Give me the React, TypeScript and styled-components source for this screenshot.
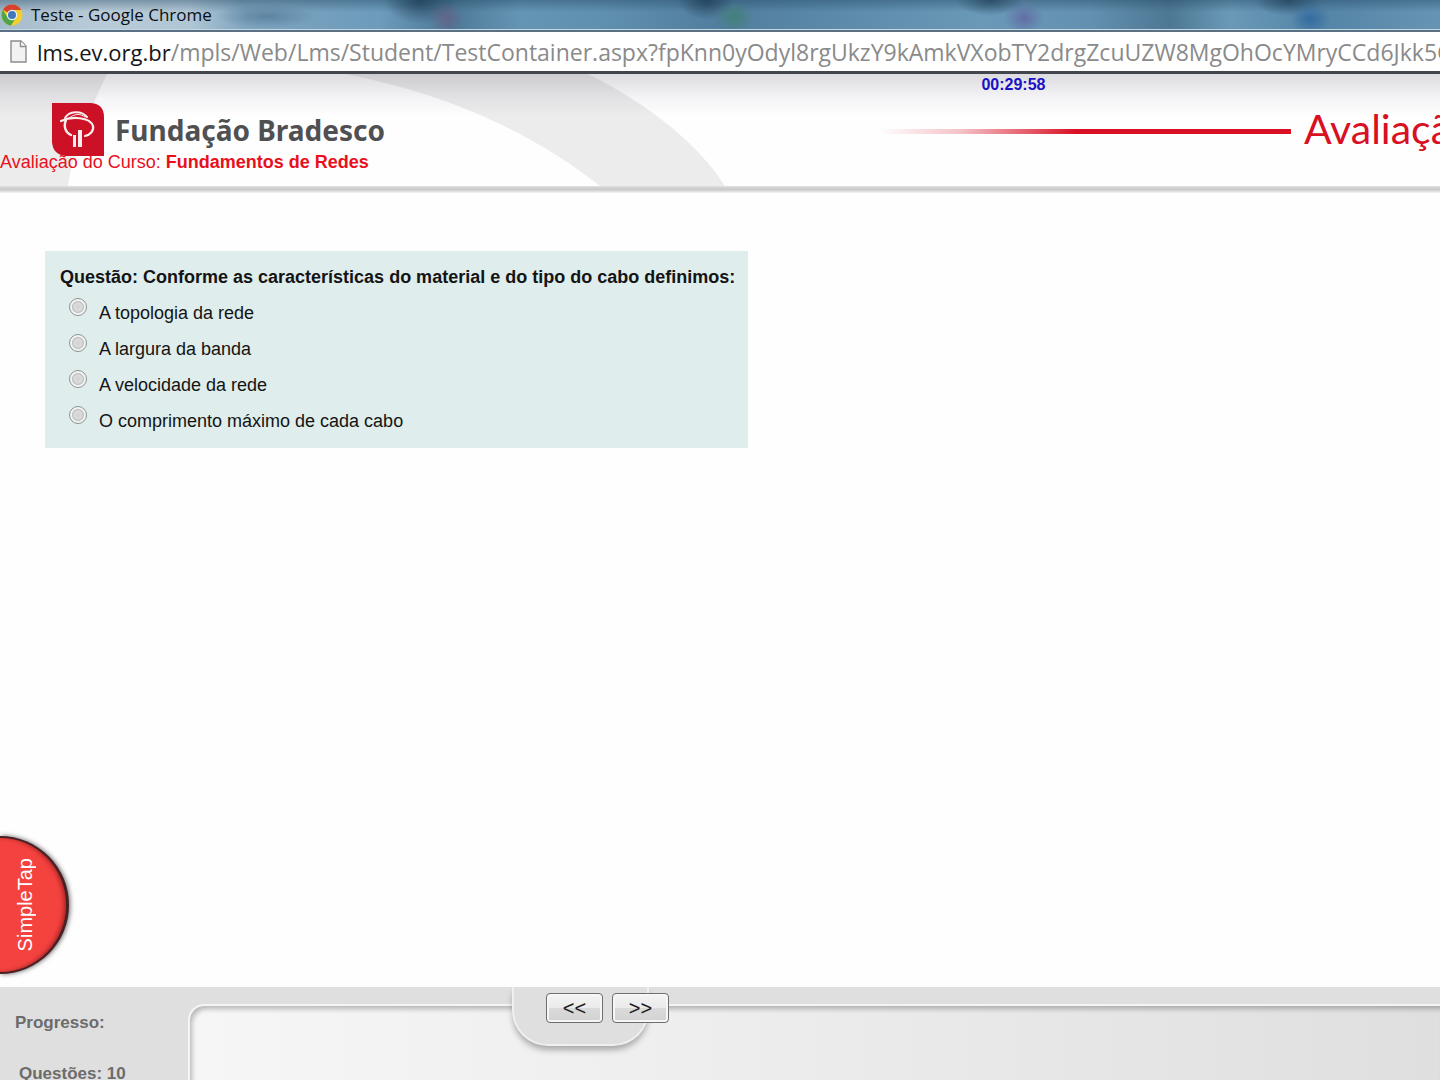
import React, { useState } from "react";
import styled, { createGlobalStyle } from "styled-components";

const sans = `"Liberation Sans", Arial, Helvetica, sans-serif`;
const humanist = `"Open Sans", "Noto Sans", sans-serif`;

const GlobalStyle = createGlobalStyle`
  * { box-sizing: border-box; }
  body { margin: 0; background: #fefefe; font-family: ${sans}; }
`;

const Page = styled.div`
  position: relative;
  display: flex;
  flex-direction: column;
  height: 100vh;
  overflow: hidden;
`;

const TitleBar = styled.div`
  display: flex;
  flex: none;
  align-items: center;
  gap: 8px;
  height: 32px;
  border-bottom: 2px solid #5a7084;
  box-shadow: inset 0 -1px 0 #c3d6e2;
  font: 17px/30px ${humanist};
  color: #0a0f14;
  white-space: nowrap;
  overflow: hidden;
  background:
    radial-gradient(ellipse 18px 16px at 446px 18px, rgba(112, 88, 128, 0.6), transparent),
    radial-gradient(ellipse 20px 16px at 734px 17px, rgba(62, 128, 112, 0.8), transparent),
    radial-gradient(ellipse 20px 16px at 1024px 18px, rgba(96, 96, 160, 0.75), transparent),
    radial-gradient(ellipse 20px 16px at 1310px 19px, rgba(48, 104, 160, 0.9), transparent),
    radial-gradient(ellipse 36px 24px at 420px 0, rgba(30, 62, 86, 0.8), transparent),
    radial-gradient(ellipse 28px 20px at 706px 0, rgba(30, 62, 86, 0.8), transparent),
    radial-gradient(ellipse 34px 16px at 990px 0, rgba(30, 62, 86, 0.7), transparent),
    radial-gradient(ellipse 34px 16px at 1288px 0, rgba(30, 62, 86, 0.7), transparent),
    radial-gradient(ellipse 50px 12px at 266px 16px, rgba(66, 106, 136, 0.55), transparent),
    linear-gradient(rgba(30, 66, 92, 0.4), transparent 40%),
    linear-gradient(90deg, #a5bccb 0, #b9cbd8 100px, #b0c6d5 190px, #7fa5bf 245px, #6c9bbb 380px, #4c7896 450px, #6595b4 520px, #6090b0 600px, #517d9e 720px, #5c8bac 850px, #6a99b7 980px, #6390b0 1090px, #4d7894 1170px, #6a99b7 1230px, #5484a6 1320px, #6694b4 100%);
`;

const AddressBar = styled.div`
  display: flex;
  flex: none;
  align-items: center;
  gap: 10px;
  height: 42px;
  padding-left: 10px;
  border-bottom: 3px solid #42464c;
  background: #fff;
  overflow: hidden;
  white-space: nowrap;
  font: 23px/38px ${humanist};
  color: #8a8a8a;
  svg { flex: none; }
`;

const Host = styled.span`
  font-size: 22px;
  color: #161616;
`;

const Header = styled.header`
  position: relative;
  display: flex;
  flex: none;
  height: 112px;
  overflow: hidden;
  background: linear-gradient(#dcdce0, #f4f4f6 24px, #fefefe 42px);
`;

const HeaderRule = styled.div`
  flex: none;
  height: 7px;
  background: linear-gradient(#e2e2e2, #cacaca 40%, #cfcfcf 60%, #f6f6f6);
`;

const Backdrop = styled.svg`
  position: absolute;
  left: 0;
  top: 0;
`;

const BrandColumn = styled.div`
  position: relative;
  flex: 0 0 61%;
  padding-top: 29px;
`;

const Brand = styled.div`
  display: flex;
  align-items: center;
  gap: 11px;
  height: 53px;
  padding-left: 52px;
  font: bold 28px/48px "Noto Sans", sans-serif;
  color: #505052;
`;

const Course = styled.div`
  margin-top: -4px;
  font-size: 18px;
  line-height: 20px;
  color: #e8101c;
  white-space: nowrap;
`;

const BannerColumn = styled.div`
  flex: 1;
  min-width: 0;
`;

const Timer = styled.div`
  padding-left: 103px;
  font-weight: bold;
  font-size: 16px;
  line-height: 22px;
  color: #1a12c4;
`;

const Banner = styled.div`
  display: flex;
  align-items: center;
  gap: 13px;
  margin-top: 9px;
`;

const BannerLine = styled.div`
  flex: 1;
  height: 5px;
  background: linear-gradient(90deg, transparent, rgba(217, 16, 36, 0.25) 20%, #d91024 48%);
`;

const BannerTitle = styled.h1`
  flex: 0 0 136px;
  margin: 0;
  padding-bottom: 4px;
  overflow: hidden;
  font: normal 41px/48px Lato, sans-serif;
  color: #d91024;
`;

const Main = styled.main`
  flex: 1;
  min-height: 0;
  padding: 58px 45px;
`;

const Question = styled.fieldset`
  width: fit-content;
  margin: 0;
  padding: 15px 13px 15px 15px;
  border: 0;
  background: #dfedec;
  color: #141414;
  font-size: 18px;
`;

const QuestionText = styled.legend`
  float: left;
  padding: 0;
  font-weight: bold;
  line-height: 23px;
`;

const Options = styled.div`
  clear: both;
`;

const Option = styled.label`
  display: flex;
  align-items: flex-start;
  gap: 12px;
  height: 36px;
  padding: 9px 0 0 9px;
  span { line-height: 31px; }
`;

const Radio = styled.input`
  appearance: none;
  width: 18px;
  height: 18px;
  margin: 0;
  border: 1px solid #8d9393;
  border-radius: 50%;
  background: radial-gradient(circle 8px, #d2d2d2 0, #dcdcdc 50%, #bcbfbf 68%, #f4f4f4 82%);
  &:checked {
    background: radial-gradient(circle 8px, #2c4c62 50%, #f2f2f2 64%);
  }
`;

const SimpleTap = styled.button`
  position: absolute;
  left: 0;
  bottom: 106px;
  display: flex;
  align-items: center;
  width: 69px;
  height: 138px;
  padding: 0 0 0 13px;
  border: solid #4a2024;
  border-width: 2px 3px 2px 0;
  border-radius: 0 69px 69px 0;
  background: #f4423f;
  box-shadow: 1px 0 5px rgba(0, 0, 0, 0.6), inset -3px 0 4px -1px rgba(90, 10, 10, 0.5);
  color: #fff;
  font: 20px/24px ${sans};
  span {
    writing-mode: vertical-rl;
    transform: rotate(180deg);
  }
`;

const Footer = styled.footer`
  position: relative;
  display: flex;
  flex: none;
  height: 93px;
  background: #dfdfdf;
`;

const Status = styled.div`
  display: flex;
  flex: 0 0 188px;
  flex-direction: column;
  gap: 31px;
  padding: 26px 0 0 15px;
  font-weight: bold;
  font-size: 17px;
  line-height: 20px;
  color: #6c6c6c;
  white-space: nowrap;
`;

const Indented = styled.div`
  padding-left: 4px;
`;

const Panel = styled.div`
  flex: 1;
  margin-top: 17px;
  border: solid #f4f4f4;
  border-width: 2px 0 0 2px;
  border-top-left-radius: 16px;
  background: linear-gradient(90deg, #f6f6f6, #eeeeee 40%, #dfdfdf);
  box-shadow: inset 3px 4px 5px -1px rgba(0, 0, 0, 0.25);
`;

const NavTab = styled.nav`
  position: absolute;
  left: 512px;
  top: 0;
  display: flex;
  gap: 9px;
  width: 137px;
  height: 59px;
  padding: 6px 0 0 32px;
  border: solid #efefef;
  border-width: 0 2px 2px;
  border-radius: 0 0 36px 36px;
  background: #dfdfdf;
  box-shadow: 0 5px 6px -1px rgba(0, 0, 0, 0.3);
  clip-path: inset(0 -30px -14px -10px);
`;

const NavButton = styled.button`
  flex: none;
  width: 57px;
  height: 30px;
  padding: 0;
  border: 1px solid #6f6f6f;
  border-radius: 4px;
  background: linear-gradient(#f3f3f3, #ebebeb 50%, #dadada 51%, #d2d2d2);
  box-shadow: inset 0 0 0 2px #f6f6f6;
  font: 20px/28px ${sans};
  color: #201820;
`;

const options = [
  "A topologia da rede",
  "A largura da banda",
  "A velocidade da rede",
  "O comprimento máximo de cada cabo",
];

function ChromeIcon() {
  return (
    <svg width="23" height="22" viewBox="0 0 23 22" aria-hidden="true">
      <circle cx="12" cy="11" r="10.5" fill="#f3cf2e" />
      <path d="M12 11 2.9 5.8A10.5 10.5 0 0 1 21.2 6H12Z" fill="#d8402f" />
      <path d="M2.9 5.8A10.5 10.5 0 0 0 11 21.4L16 13.5 7.6 13.4Z" fill="#4fa447" />
      <circle cx="12" cy="11" r="5.2" fill="#eef2f5" />
      <circle cx="12" cy="11" r="4" fill="#3f78c0" />
    </svg>
  );
}

function PageIcon() {
  return (
    <svg width="17" height="23" viewBox="0 0 17 23" aria-hidden="true">
      <path d="M1 1h10l5 5v16H1Z" fill="#f2f2f2" stroke="#8c8c8c" strokeWidth="1.4" />
      <path d="M10.500 1v5.500H16" fill="#fff" stroke="#8c8c8c" strokeWidth="1.4" />
    </svg>
  );
}

function BrandMark() {
  return (
    <svg width="52" height="53" viewBox="0 0 52 53" aria-hidden="true">
      <path d="M0 0H39Q52 1 52 14V53H14Q1 52 0 39Z" fill="#cc1126" />
      <g fill="none" stroke="#fbeeee" strokeLinecap="round">
        <path d="M13 15C17 8 29 7 35 14" strokeWidth="2" />
        <path d="M9 18C20 13 38 14 41 23C42 28 38 32 33 33" strokeWidth="2.2" />
        <path d="M14 17C11 24 14 30 19 32" strokeWidth="2.4" />
        <path d="M17 15C22 11 28 10 33 14" strokeWidth="1" />
      </g>
      <path d="M21 32h3v12h-3ZM26 27h4v17h-4Z" fill="#fbeeee" />
    </svg>
  );
}

export default function App() {
  const [answer, setAnswer] = useState<string | null>(null);
  return (
    <>
      <GlobalStyle />
      <Page>
        <TitleBar>
          <ChromeIcon />
          <span>Teste - Google Chrome</span>
        </TitleBar>
        <AddressBar>
          <PageIcon />
          <span>
            <Host>lms.ev.org.br</Host>
            /mpls/Web/Lms/Student/TestContainer.aspx?fpKnn0yOdyl8rgUkzY9kAmkVXobTY2drgZcuUZW8MgOhOcYMryCCd6Jkk5C
          </span>
        </AddressBar>
        <Header>
          <Backdrop width="760" height="112" viewBox="0 0 760 112" aria-hidden="true">
            <path
              d="M0 0H107C92 32 74 72 68 112H0ZM345 0H588C652 32 700 72 725 112H600C530 56 440 18 345 0Z"
              fill="#000"
              fillOpacity="0.07"
            />
          </Backdrop>
          <BrandColumn>
            <Brand>
              <BrandMark />
              <span>Fundação Bradesco</span>
            </Brand>
            <Course>
              Avaliação do Curso: <b>Fundamentos de Redes</b>
            </Course>
          </BrandColumn>
          <BannerColumn>
            <Timer role="timer">00:29:58</Timer>
            <Banner>
              <BannerLine />
              <BannerTitle>Avaliação</BannerTitle>
            </Banner>
          </BannerColumn>
        </Header>
        <HeaderRule />
        <Main>
          <Question>
            <QuestionText>
              Questão: Conforme as características do material e do tipo do cabo definimos:
            </QuestionText>
            <Options>
              {options.map((text) => (
                <Option key={text}>
                  <Radio
                    type="radio"
                    name="answer"
                    checked={answer === text}
                    onChange={() => setAnswer(text)}
                  />
                  <span>{text}</span>
                </Option>
              ))}
            </Options>
          </Question>
        </Main>
        <SimpleTap type="button">
          <span>SimpleTap</span>
        </SimpleTap>
        <Footer>
          <Status>
            <div>Progresso:</div>
            <Indented>Questões: 10</Indented>
          </Status>
          <Panel />
          <NavTab aria-label="Questões">
            <NavButton type="button">&lt;&lt;</NavButton>
            <NavButton type="button">&gt;&gt;</NavButton>
          </NavTab>
        </Footer>
      </Page>
    </>
  );
}
